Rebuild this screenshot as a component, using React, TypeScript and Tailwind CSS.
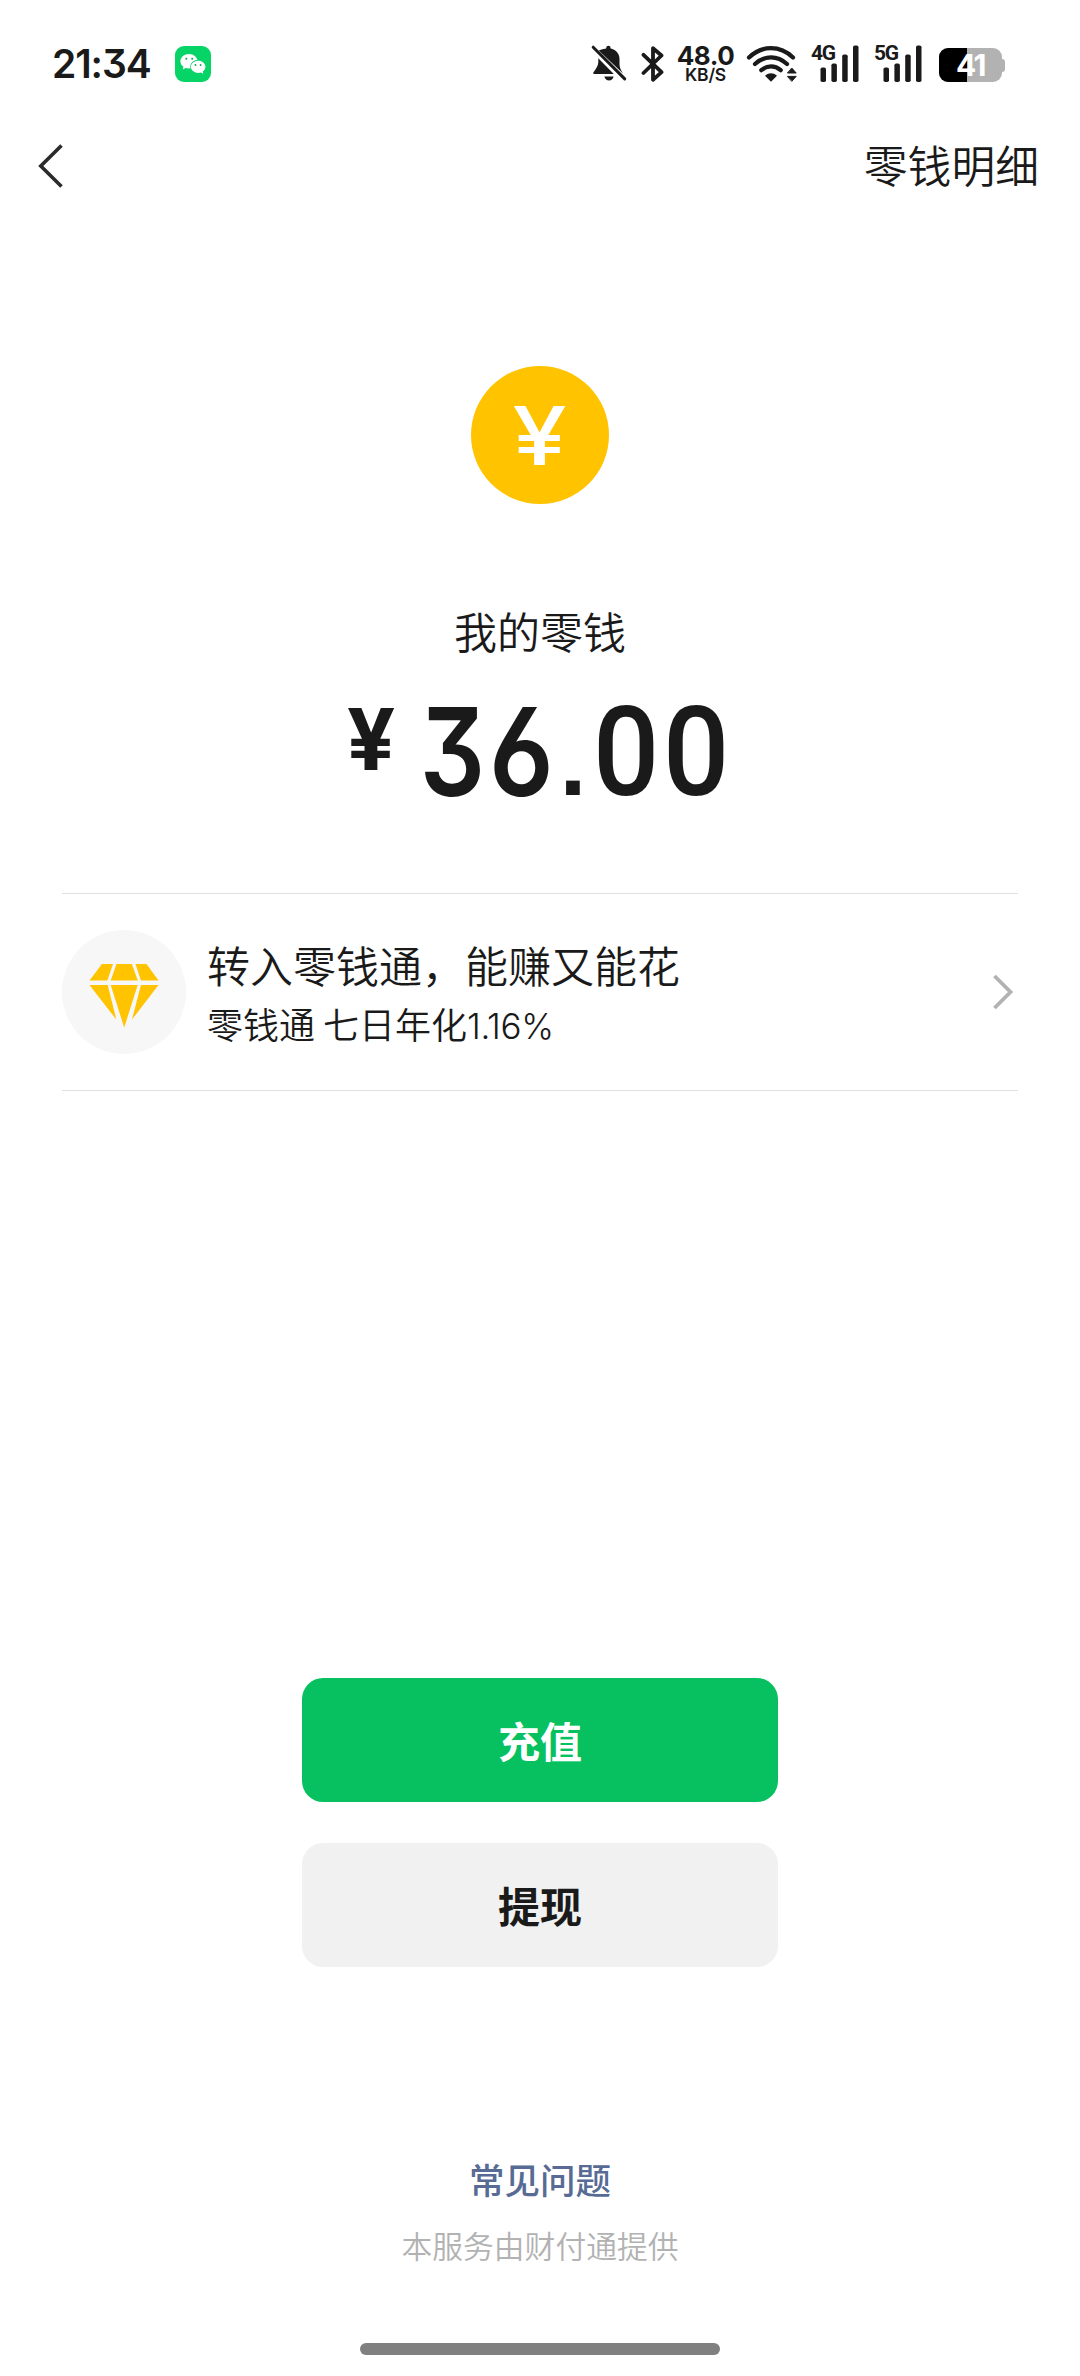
import React from 'react';

function WeChatBadge() {
  return (
    <svg width="36" height="36" viewBox="0 0 36 36">
      <rect width="36" height="36" rx="9" fill="#07d467" />
      <path d="M14 8C9.300 8 5.400 11.200 5.400 15.300c0 2.300 1.200 4.200 3.100 5.500l-.8 2.700 3.100-1.600c1 .3 2.100.5 3.200.5 4.700 0 8.500-3.100 8.500-7.100S18.700 8 14 8z" fill="#fff" />
      <ellipse cx="23.200" cy="20.700" rx="8" ry="6.900" fill="#07d467" />
      <path d="M23.200 14.700c-4 0-7.300 2.700-7.300 6.100s3.300 6.100 7.300 6.100c.9 0 1.800-.1 2.600-.4l2.500 1.300-.6-2.200c1.700-1.100 2.700-2.800 2.700-4.800 0-3.400-3.200-6.100-7.200-6.100z" fill="#fff" />
      <circle cx="11.300" cy="12.800" r="1" fill="#08a552" />
      <circle cx="17.200" cy="12.800" r="1" fill="#08a552" />
      <circle cx="20.500" cy="19" r=".9" fill="#08a552" />
      <circle cx="25.600" cy="19" r=".9" fill="#08a552" />
    </svg>
  );
}

function BellOff() {
  return (
    <svg width="36" height="38" viewBox="0 0 36 38" fill="#1a1a1a">
      <path d="M7.800 5.500C10 4.500 12.500 3.900 15.200 3.600V3a2.200 2.200 0 0 1 4.400 0v.6c5 .9 8.900 5 8.900 10.200v5.500c0 3.500 1.500 6.200 3.500 9.200z" />
      <path d="M7.300 13.300 22.800 29H3.400c-1 0-1.500-1-.9-1.800 3-3.800 4.500-6.600 4.800-10z" />
      <path d="M13.400 31.500h9.200c-.6 2.600-2.400 3.900-4.600 3.900s-4-1.300-4.600-3.900z" />
      <path d="M2.200 2.200 33.700 33.900" stroke="#1a1a1a" strokeWidth="3" strokeLinecap="round" />
    </svg>
  );
}

function BluetoothIcon() {
  return (
    <svg width="24" height="38" viewBox="0 0 24 38" fill="none" stroke="#1a1a1a" strokeWidth="3.800" strokeLinecap="round" strokeLinejoin="round">
      <path d="M2.500 9.800 20.500 27.200 12 34.800V3.200L20.500 10.500 2.500 28" />
    </svg>
  );
}

function WifiIcon() {
  return (
    <svg width="52" height="38" viewBox="0 0 52 38" fill="none" stroke="#1a1a1a" strokeWidth="4.200" strokeLinecap="round">
      <path d="M3 12.500C9.500 6.300 17 3.200 25 3.200s15.500 3.100 22 9.300" />
      <path d="M9 19c4.700-4.300 10-6.600 16-6.600S36.300 14.700 41 19" />
      <path d="M15.300 25.200c2.900-2.500 6-3.800 9.700-3.800s6.800 1.300 9.700 3.800" />
      <path d="M25 29c2 0 3.600.6 5 1.800L25 35.600l-5-4.800c1.400-1.200 3-1.800 5-1.800z" fill="#1a1a1a" strokeWidth="1.500" strokeLinejoin="round" />
      <path d="M46 23.300l4.200 4.700h-8.400zM46 36.100l4.200-4.700h-8.400z" fill="#1a1a1a" strokeWidth="1" strokeLinejoin="round" />
    </svg>
  );
}

function Signal({ label }: { label: string }) {
  return (
    <div className="relative w-12 h-[37px]">
      <span className="absolute left-0 top-[-1px] font-['Roboto',sans-serif] text-[21px] leading-[18px] font-bold tracking-[-1.200px]">{label}</span>
      <svg width="48" height="37" viewBox="0 0 48 37" fill="#1a1a1a">
        <rect x="9.500" y="22.500" width="5.500" height="14.500" rx="1.800" />
        <rect x="20.400" y="18.500" width="5.500" height="18.500" rx="1.800" />
        <rect x="31.200" y="9.500" width="5.500" height="27.500" rx="1.800" />
        <rect x="42" y=".5" width="5.500" height="36.500" rx="1.800" />
      </svg>
    </div>
  );
}

function Battery({ level }: { level: number }) {
  return (
    <div className="flex items-center">
      <div className="relative w-[63px] h-[34px] rounded-[9px] bg-[#b2b2b2] overflow-hidden">
        <div className="h-full bg-black" style={{ width: `${level + 3}%` }} />
        <span className="absolute inset-0 flex items-center justify-center font-['Inter',sans-serif] text-[30px] leading-none font-bold tracking-[-1.500px] text-white">{level}</span>
      </div>
      <div className="w-[3px] h-[13px] rounded-r-full bg-[#b2b2b2]" />
    </div>
  );
}

function StatusBar() {
  return (
    <div className="flex h-[130px] pl-[52px] pr-[75px] pt-[45px] items-start justify-between">
      <div className="flex items-center h-[38px]">
        <span className="w-[123px] font-['Inter',sans-serif] text-[39px] leading-[38px] font-semibold tracking-[-1.100px] [font-feature-settings:'cv09']">21:34</span>
        <WeChatBadge />
      </div>
      <div className="flex items-start">
        <div className="w-[50px]"><BellOff /></div>
        <div className="w-[35px]"><BluetoothIcon /></div>
        <div className="flex flex-col items-center w-[59px] mr-[11px] font-['Inter',sans-serif]">
          <span className="text-[26px] leading-[21px] font-bold tracking-[-0.500px]">48.0</span>
          <span className="text-[17.500px] leading-[18px] font-semibold tracking-[-0.200px]">KB/S</span>
        </div>
        <div className="w-[65px]"><WifiIcon /></div>
        <div className="w-[63px]"><Signal label="4G" /></div>
        <div className="w-[65px]"><Signal label="5G" /></div>
        <div className="pt-[3px]"><Battery level={41} /></div>
      </div>
    </div>
  );
}

function Diamond() {
  return (
    <svg className="mt-[7px]" width="70" height="64" viewBox="0 0 70 64" fill="#ffc300">
      <path d="M13 0h11L18.300 16.500H.5zM27.500 0h15.300l6 16.500H21.700zM46.500 0H57.500L69.500 16.500H52z" />
      <path d="M.5 21h18.200l8.600 34.500zM21.700 21h27L35.200 63.500zM52 21h17.500L43 55.500z" />
    </svg>
  );
}

function Amount() {
  return (
    <div className="mt-[23px] mr-[2px] flex w-[383px] h-[132px] leading-[132px]">
      <span className="w-[70px] font-['Roboto',sans-serif] text-[88px] leading-[108px] font-bold">¥</span>
      <span className="w-[69px] flex justify-center font-['Inter',sans-serif] text-[122px] font-semibold scale-x-[0.84] [font-feature-settings:'cv09','cv03']">3</span>
      <span className="w-[69px] flex justify-center font-['Inter',sans-serif] text-[122px] font-semibold scale-x-[0.88] [font-feature-settings:'cv09','cv03']">6</span>
      <span className="w-[35px] flex justify-center font-['Liberation_Sans',sans-serif] text-[97px] leading-[152px] font-bold">.</span>
      <span className="w-[70px] flex justify-center font-['Roboto',sans-serif] text-[124px] leading-[134px] font-medium scale-x-[0.94]">0</span>
      <span className="w-[70px] flex justify-center font-['Roboto',sans-serif] text-[124px] leading-[134px] font-medium scale-x-[0.94]">0</span>
    </div>
  );
}

export default function App() {
  return (
    <div className="w-[1080px] h-[2376px] flex flex-col bg-white text-[#1a1a1a] font-['Noto_Sans_CJK_SC',sans-serif] whitespace-nowrap overflow-hidden">
      <StatusBar />

      <header className="flex items-center justify-between h-[72px] pl-[37px] pr-[41px]">
        <svg width="28" height="48" viewBox="0 0 28 48" fill="none" stroke="#2b2b2b" strokeWidth="3.600">
          <path d="M24.500 3.500 3.800 24 24.500 44.500" />
        </svg>
        <span className="pb-[4px] text-[43.800px] leading-[68px] font-[350]">零钱明细</span>
      </header>

      <main className="flex flex-col items-center">
        <div className="mt-[164px] w-[138px] h-[138px] rounded-full bg-[#ffc300] flex items-center justify-center">
          <span className="pt-[2px] font-['Inter',sans-serif] text-[81px] leading-none font-medium text-white scale-x-[1.2]">¥</span>
        </div>
        <div className="mt-[94px] mb-[1px] text-[43px] leading-[64px] font-[350]">我的零钱</div>
        <Amount />

        <section className="mt-[75px] w-[956px] h-[198px] border-y border-[#e0e0e0] flex items-center">
          <div className="w-[124px] h-[124px] rounded-full bg-[#f7f7f7] flex items-center justify-center">
            <Diamond />
          </div>
          <div className="ml-[21px] pt-[2px] flex-1 flex flex-col font-[350]">
            <span className="text-[43px] leading-[62px]">转入零钱通，能赚又能花</span>
            <span className="text-[36px] leading-[56px]">
              零钱通 七日年化<span className="font-['Inter',sans-serif] text-[35px] font-[350] tracking-[-0.300px]">1.16%</span>
            </span>
          </div>
          <svg className="mr-[4px]" width="22" height="36" viewBox="0 0 22 36" fill="none" stroke="#b2b2b2" strokeWidth="3.800">
            <path d="M2.500 2 18.500 18 2.500 34" />
          </svg>
        </section>

        <button className="mt-[587px] w-[476px] h-[124px] rounded-[21px] bg-[#07c160] pb-[2px] text-white text-[42px] font-bold">充值</button>
        <button className="mt-[41px] w-[476px] h-[124px] rounded-[21px] bg-[#f1f1f1] pb-[2px] text-[42px] font-bold">提现</button>

        <a className="mt-[186px] text-[35.500px] leading-[52px] font-medium text-[#576b95]">常见问题</a>
        <p className="mt-[18px] text-[30.800px] leading-[44px] font-[350] text-[#b2b2b2]">本服务由财付通提供</p>
        <div className="mt-[76px] w-[360px] h-[12px] rounded-full bg-[#808080]" />
      </main>
    </div>
  );
}
